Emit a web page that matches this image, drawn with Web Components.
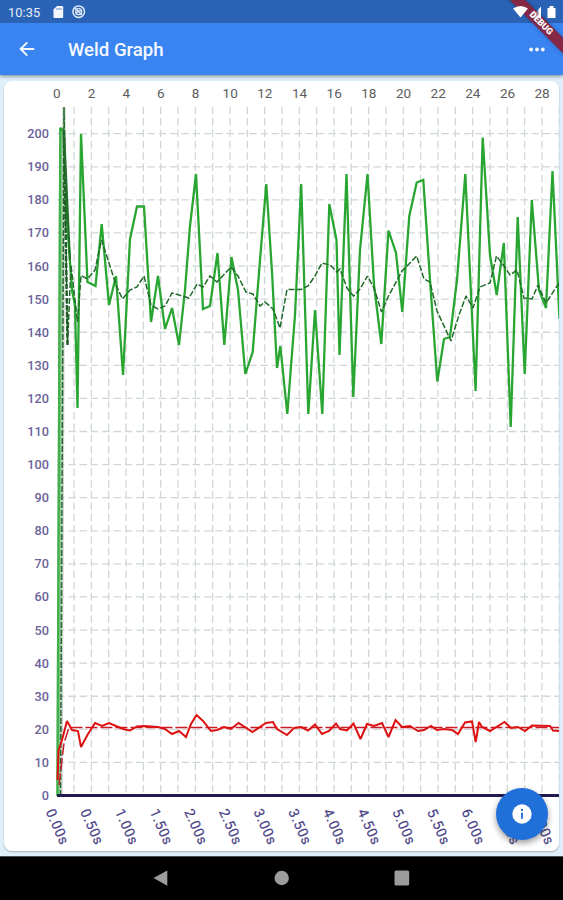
<!DOCTYPE html>
<html lang="en"><head><meta charset="utf-8"><title>Weld Graph</title>
<style>html,body{margin:0;height:100%;overflow:hidden}body{font-family:Roboto,"Liberation Sans",sans-serif}</style></head>
<body><weld-app></weld-app>
<script>
const define=(name,html,setup)=>customElements.define(name,class extends HTMLElement{
  constructor(){super();this.attachShadow({mode:'open'}).innerHTML=html;if(setup)setup(this.shadowRoot);}
});

define('status-bar',`<style>
:host{display:flex;align-items:center;height:23px;position:relative;z-index:3;color:#e6eefa;font-size:12.8px;padding:1px 6px 0 8px;box-sizing:border-box}
span{width:45px;letter-spacing:.1px}.r{margin-left:auto}svg{display:block}
</style><span>10:35</span>
<svg width="34" height="16" viewBox="0 0 34 16"><path d="M4 2h5.200q1 0 1 1v10q0 1-1 1H1.500q-1 0-1-1V5.500z" fill="#f3f7fd"/><path d="M4 4v2M6 4v2M8 4v2" stroke="#2a63b5" stroke-width=".7"/>
<circle cx="25.700" cy="7.700" r="5.800" fill="none" stroke="#dfe9f8" stroke-width="1.500"/><circle cx="25.700" cy="7.700" r="3" fill="none" stroke="#dfe9f8" stroke-width="1.200"/><path d="M22 4l7 7M23 10q1-4 5-3" fill="none" stroke="#dfe9f8" stroke-width="1.300"/></svg>
<svg class="r" width="44" height="16" viewBox="0 0 44 16"><path d="M0 4.500Q7.500-.5 15 4.500L7.500 13.500z" fill="#fff"/><path d="M28 3v11H17.500z" fill="#fff" opacity=".35"/><path d="M28 2.500v11.500h-2.500V5.500z" fill="#fff"/><path d="M34.500 4h2V2h4v2h2v10h-8z" fill="#fff"/></svg>`);

define('app-bar',`<style>
:host{display:flex;align-items:center;height:52px;background:#3984f1;color:#f5f9ff;padding:0 17px 0 18px;box-sizing:border-box;box-shadow:0 1px 4px #0007;position:relative;clip-path:inset(0 0 -8px 0)}
h1{font-size:18.6px;font-weight:500;line-height:24px;margin:2px 0 0 32px}.m{margin-left:auto}
</style><svg width="18" height="18" viewBox="0 0 18 18" fill="none" stroke="#f5f9ff" stroke-width="1.900"><path d="M16.200 9H3M9.300 2.300L2.600 9l6.700 6.700"/></svg><h1>Weld Graph</h1>
<svg class="m" width="18" height="6" fill="#f5f9ff"><circle cx="3.100" cy="3.500" r="1.900"/><circle cx="9" cy="3.500" r="1.900"/><circle cx="14.800" cy="3.500" r="1.900"/></svg>`);

define('debug-ribbon',`<style>
:host{position:absolute;top:0;right:0;width:64px;height:64px;overflow:hidden;pointer-events:none;z-index:2}
div{position:absolute;left:-3px;top:18px;width:90px;height:11px;line-height:11px;transform:rotate(45deg);background:#842846;color:#fff;font-size:9px;font-weight:900;text-align:center;box-shadow:0 0 4px #0005}
</style><div>DEBUG</div>`);

define('weld-chart',`<style>
:host{display:block;height:770px;background:#fff;border-radius:8px;overflow:hidden;box-shadow:0 1px 2px #0004}svg{display:block}
.grid{stroke:#d0d7d7;stroke-width:1.300;stroke-dasharray:7.500 3.800}
.y{font-size:12.7px;font-weight:500;fill:#6a639a;text-anchor:end}
.t{font-size:13.5px;fill:#5c5c5c;text-anchor:middle}
.x{font-size:14px;fill:#494386;letter-spacing:.65px;stroke:#494386;stroke-width:.2px}
polyline{fill:none;stroke-linejoin:miter;stroke-miterlimit:2}
</style><svg width="555" height="770" viewBox="4 81 555 770">
<g id="grid" class="grid"></g>
<polyline stroke="#29a632" stroke-width="2.300" points="57.500,796 60.300,128 63,130 68,235 72,290 75,305 77.500,408 81,134 87.500,282 95.500,286 101.700,224 109,305 116,276 123,375 130,239 137,206.500 144,206.500 151,322 158,276 165,329 172,308 179,345 185,290 190,226 196,174 203,309 210,306 217.500,253 224.300,345 231.500,257 238,290 245.300,374 252.700,352 260,260 266.300,184 272,272 277,368 280.300,346 287.300,414 295,315 301.200,184 308.300,414 315,310 322.300,414 329.300,204 336.500,240 339.500,355 346.500,174 353.300,397 360,250 367.500,174 374,285 381.300,344 388.500,230.500 396,253 402.300,312 409.300,216 416.700,182.500 423.300,180 430,280 437.300,381.500 444,339 450,337 457,280 465.300,174 475.600,391 482.700,137.500 490,255 496.700,295 503.800,243 510.700,427 517.700,217 524.700,374 531.800,200 539,290 546,308 552.500,171 559.500,319"/>
<path d="M58 796L61 131" stroke="#4fb457" stroke-width="3.500" opacity=".65" fill="none"/>
<path d="M61 796L64 107" stroke="#8d9c8d" stroke-width="3.200" opacity=".45" fill="none"/>
<polyline stroke="#206b29" stroke-width="1.500" stroke-dasharray="6 2" points="60.500,796 64,107 67.500,345 71,265 77.500,322 81,275.500 87.500,279 95,270 101.500,240 109,263 116,285 122.500,299 130,290 137,287 144,276 151,305 158,309 165,306 172,293 179,295 189,298 197,284 203,287 210,276 217,282 231,267 238,276 246,292 253,294 260,306 265,302 273,309 280,328 287,289.500 301,289.500 308,286 315,276 322,263 330,265 337,272 340,269 347,288 353.500,296 360,289 367.500,276 374,288 381.500,312 388,297 402,271 409,264 416.700,256 424,279 430,282 437,311 451,341 459,315 466,296 473,308 480,287 490,283 496.500,256 504,266 510,275 517,270 524,298 532,299 538,285 546,303 559,283"/>
<path d="M64 130L67.500 345" stroke="#215c27" stroke-width="2.400" stroke-dasharray="5 2"/>
<path d="M64 130L70 260" stroke="#246e2c" stroke-width="2"/>
<path d="M57 795.500H559" stroke="#211b50" stroke-width="3"/>
<polyline stroke="#c91d2a" stroke-width="1.500" stroke-dasharray="12 3" points="59,785 64,743 69,727.500 559,727.500"/>
<polyline stroke="#dc1111" stroke-width="2" points="57.500,780 58.500,751 62,740 67,721 72,730 78,731 81,747 88,734 95,723 102,726 109,723 116,726 123,729 130,730.500 137,726.500 144,726 158,727 165,729 172,734 179,731 186,737 191,724 196.500,715 203,721 211,731 217,730 224,727 231,729 238.500,723 252.500,732 266,723 273,722 277,729 287,735 294,728 301,727 308,730.500 315,724.500 322,734 329,731 336,723.500 340,729 347,730.500 353.500,723.500 360.500,739 367,724 374,726 382,723 388.500,737 395.500,720 402,727 410,726 418,731 424,730 431,726 437,730 444,729 452,730 458,734 465,722.500 472,721.500 475.700,742 479,722 482,727 490,731 504.500,722 511,728 518,727 525,731 532,725.500 550,726 553,730.500 559,731"/>
<g id="labels"></g></svg>`,root=>{
  let g='',l='';
  for(let i=1;i<30;i++){const x=56.7+i*17.33;g+=`<path d="M${x} 107V796"/>`;}
  for(let v=0;v<=200;v+=10){const y=795.5-v*3.309;if(v)g+=`<path d="M57 ${y}H559"/>`;l+=`<text class="y" x="49" y="${y+4.5}">${v}</text>`;}
  for(let i=0;i<15;i++){const x=56.9+i*34.66;
    l+=`<text class="t" x="${x}" y="97.500">${i*2}</text>`;
    l+=`<text class="x" transform="translate(${x-11.500} 811.500) rotate(66)">${(i/2).toFixed(2)}s</text>`;}
  root.getElementById('grid').innerHTML=g;root.getElementById('labels').innerHTML=l;
});

define('info-fab',`<style>
:host{position:absolute;left:495.500px;top:788px;width:52px;height:52px;border-radius:50%;background:#2170da;box-shadow:0 3px 6px #0006;display:grid;place-items:center}
</style><svg width="20" height="20"><circle cx="10" cy="10" r="9.700" fill="#fff"/><path d="M10 8.800v6M10 5v2" stroke="#2170da" stroke-width="1.900"/></svg>`);

define('nav-bar',`<style>:host{display:block;height:44px;background:#000;border-top:1px solid #47525a;box-sizing:border-box}svg{display:block}</style>
<svg width="563" height="43" fill="#9c9c9c"><path d="M153.500 21L167.300 13.500v15.300z"/><circle cx="281.700" cy="21" r="7.200"/><rect x="394.500" y="13.500" width="14.700" height="15" rx="1.500"/></svg>`);

define('weld-app',`<style>
:host{display:flex;flex-direction:column;width:563px;height:900px;position:relative;background:linear-gradient(#2a63b5 23px,#e0f0fb 23px);overflow:hidden}
main{flex:1;padding:6px 4px 0}
</style><status-bar></status-bar><app-bar></app-bar><main><weld-chart></weld-chart></main><nav-bar></nav-bar><info-fab></info-fab><debug-ribbon></debug-ribbon>`);
</script></body></html>
